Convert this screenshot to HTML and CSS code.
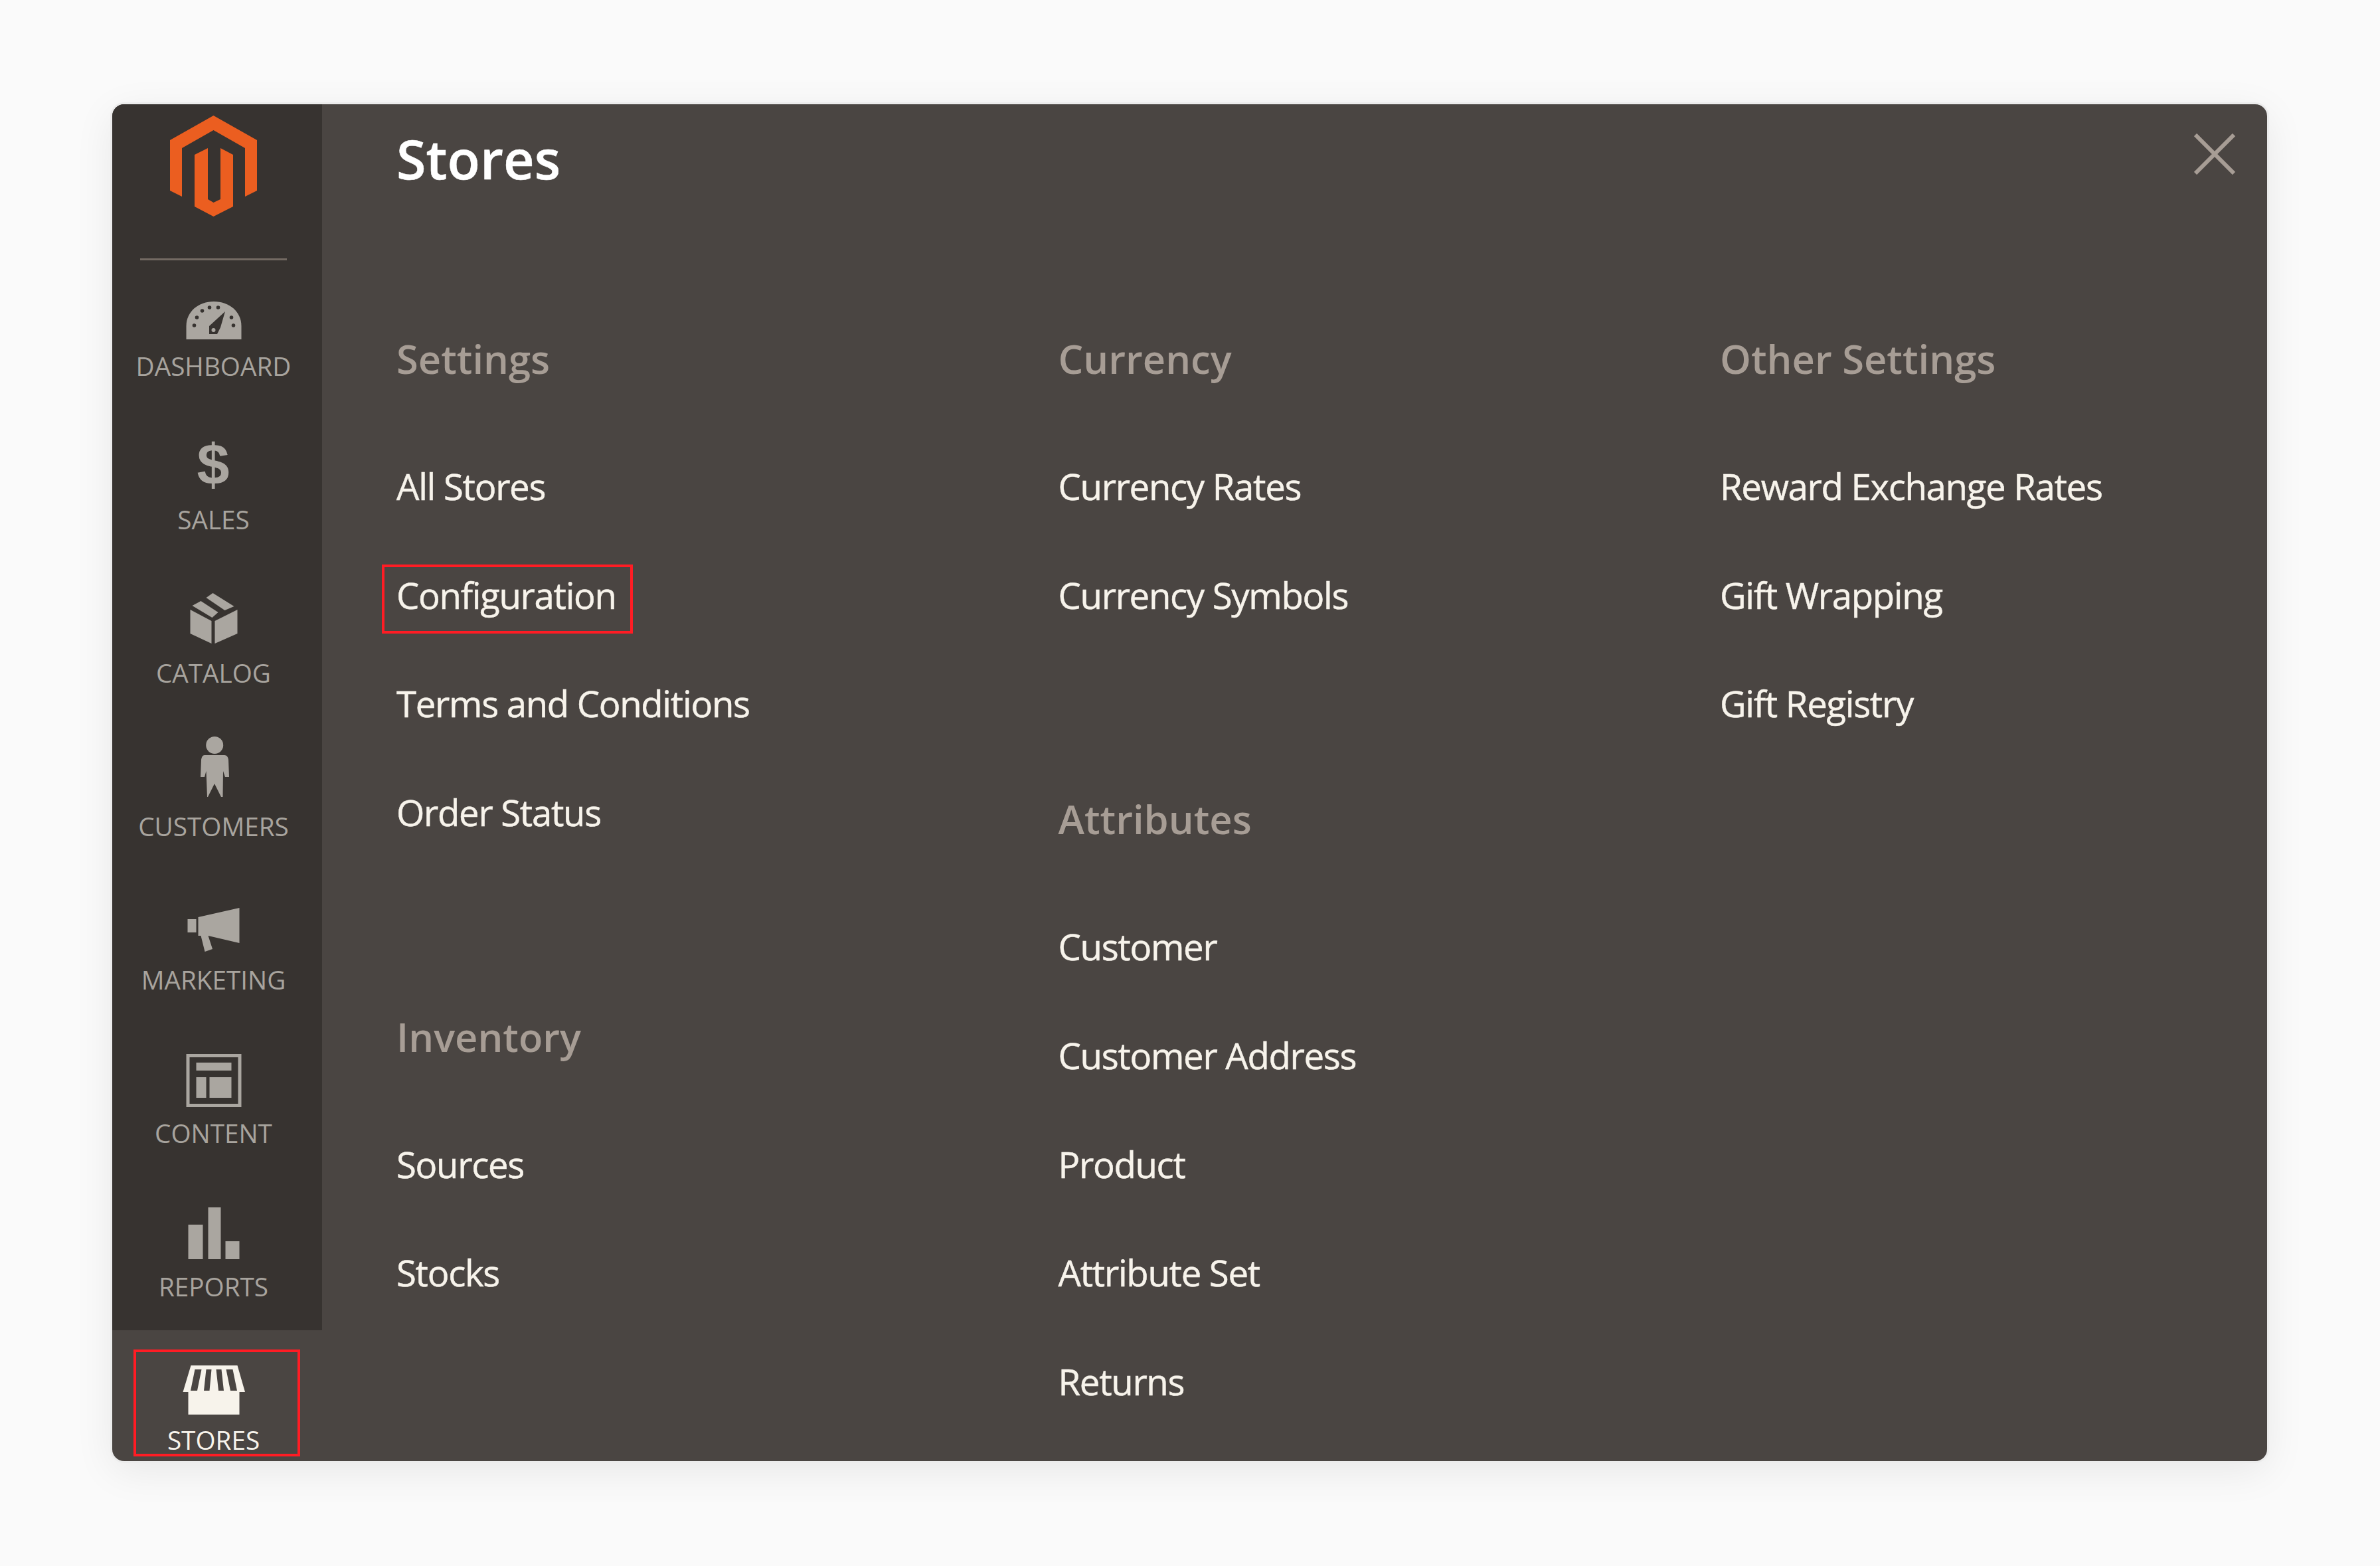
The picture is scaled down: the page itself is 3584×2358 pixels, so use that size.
FILE: index.html
```html
<!DOCTYPE html>
<html lang="en">
<head>
<meta charset="utf-8">
<title>Stores menu</title>
<link rel="stylesheet" href="styles.css">
</head>
<body>
<div class="panel">
  <aside class="sidebar">
    <div class="brand">
      <svg class="logo" viewBox="0 0 131 152"><path d="M65.5 0L131 37V113L113 122V49L65.5 22L18 49V122L0 113V37Z"/><path d="M57 49V126L65.5 131L76 126V49L95 59V137L65.5 152L37 137V59Z"/></svg>
    </div>
    <nav class="nav">
      <a class="nav-item">
        <svg class="nav-icon" viewBox="0 -10 100 100"><path d="M8.5 90V70C8.5 48 27 33 50 33C73 33 91.5 48 91.5 70V90Z"/><g class="cut"><circle cx="20.5" cy="69" r="2.8"/><circle cx="24.5" cy="57" r="2.8"/><circle cx="32.5" cy="47" r="2.8"/><circle cx="43.5" cy="42" r="2.8"/><circle cx="56.5" cy="42" r="2.8"/><circle cx="76.5" cy="57" r="2.8"/><circle cx="79.5" cy="69" r="2.8"/><path d="M67 48L43 70V82H55L60 72Z"/></g><circle cx="49.5" cy="76" r="3"/></svg>
        <span class="nav-label">Dashboard</span>
      </a>
      <a class="nav-item">
        <svg class="nav-icon" viewBox="0 -10 100 100"><text class="dollar" x="49" y="78">$</text></svg>
        <span class="nav-label">Sales</span>
      </a>
      <a class="nav-item">
        <svg class="nav-icon" viewBox="0 -10 100 100"><path d="M14.5 35L46.5 52V86L14.5 71Z"/><path d="M51.5 52L85.5 35V71L51.5 86Z"/><path d="M17.5 29L30.5 22L56.5 39L47.5 47Z"/><path d="M38.5 17L48.5 10L80.5 30L66.5 36Z"/></svg>
        <span class="nav-label">Catalog</span>
      </a>
      <a class="nav-item">
        <svg class="nav-icon" viewBox="0 -10 100 100"><circle cx="51.2" cy="8" r="13"/><path d="M36 23H66Q71 23 72 30L73 56H67L64 47L63.5 86H61L51 66L41 86H40L38.5 47L36 56H30L31 30Q32 23 36 23Z"/></svg>
        <span class="nav-label">Customers</span>
      </a>
      <a class="nav-item">
        <svg class="nav-icon" viewBox="0 -10 100 100"><rect x="10.5" y="39" width="13" height="20"/><path d="M26.5 36L88.5 22V75L41.5 64L48 84L36.5 88L30.5 64H26.5Z"/></svg>
        <span class="nav-label">Marketing</span>
      </a>
      <a class="nav-item">
        <svg class="nav-icon" viewBox="0 -10 100 100"><rect class="frame" x="11" y="13.5" width="78" height="75"/><rect x="23.5" y="24" width="53" height="12"/><rect x="23.5" y="46" width="15" height="31"/><rect x="43.5" y="46" width="33" height="31"/></svg>
        <span class="nav-label">Content</span>
      </a>
      <a class="nav-item">
        <svg class="nav-icon" viewBox="0 -10 100 100"><rect x="11.5" y="37" width="22" height="52"/><rect x="41.5" y="11" width="19" height="78"/><rect x="67.5" y="62" width="21" height="27"/></svg>
        <span class="nav-label">Reports</span>
      </a>
      <a class="nav-item is-active">
        <svg class="nav-icon" viewBox="0 -10 100 100"><path fill-rule="evenodd" d="M15.5 18H85.5L97 58H3.5ZM21.5 24L15 56H25L31.5 24ZM38.5 24L35 56H43.5L46.5 24ZM53.5 24L57 56H65L61.5 24ZM68.5 24L75 56H85L78.5 24Z"/><rect x="11.5" y="57" width="77" height="35"/></svg>
        <span class="nav-label">Stores</span>
      </a>
    </nav>
  </aside>
  <main class="content">
    <h1 class="title">Stores</h1>
    <button class="close" aria-label="Close"><svg viewBox="0 0 62 62"><path d="M2 2L60 60M60 2L2 60"/></svg></button>
    <div class="columns">
      <div class="column">
        <section class="group">
          <h2 class="group-title">Settings</h2>
          <ul class="links">
            <li><a class="link">All Stores</a></li>
            <li><a class="link is-marked">Configuration</a></li>
            <li><a class="link">Terms and Conditions</a></li>
            <li><a class="link">Order Status</a></li>
          </ul>
        </section>
        <section class="group">
          <h2 class="group-title">Inventory</h2>
          <ul class="links">
            <li><a class="link">Sources</a></li>
            <li><a class="link">Stocks</a></li>
          </ul>
        </section>
      </div>
      <div class="column">
        <section class="group">
          <h2 class="group-title">Currency</h2>
          <ul class="links">
            <li><a class="link">Currency Rates</a></li>
            <li><a class="link">Currency Symbols</a></li>
          </ul>
        </section>
        <section class="group">
          <h2 class="group-title">Attributes</h2>
          <ul class="links">
            <li><a class="link">Customer</a></li>
            <li><a class="link">Customer Address</a></li>
            <li><a class="link">Product</a></li>
            <li><a class="link">Attribute Set</a></li>
            <li><a class="link">Returns</a></li>
          </ul>
        </section>
      </div>
      <div class="column">
        <section class="group">
          <h2 class="group-title">Other Settings</h2>
          <ul class="links">
            <li><a class="link">Reward Exchange Rates</a></li>
            <li><a class="link">Gift Wrapping</a></li>
            <li><a class="link">Gift Registry</a></li>
          </ul>
        </section>
      </div>
    </div>
  </main>
</div>
</body>
</html>
```
FILE: styles.css
```css
*, *::before, *::after { box-sizing: border-box; }
html, body { margin: 0; padding: 0; }
body {
  width: 3584px;
  height: 2358px;
  overflow: hidden;
  background: #fafafa;
  padding: 157px 170px 158px 169px;
  font-family: "Open Sans", "Liberation Sans", sans-serif;
}
.panel {
  position: relative;
  display: flex;
  height: 2043px;
  background: #4a4542;
  border-radius: 18px;
  box-shadow: 0 0 0 3px #ececec, 0 14px 60px rgba(0, 0, 0, .08);
}
.sidebar { width: 316px; flex: none; display: flex; flex-direction: column; }
.brand {
  height: 235px;
  margin-bottom: -6px;
  padding: 17px 11px 0 0;
  background: #373330;
  border-radius: 18px 0 0 0;
  position: relative;
  z-index: 1;
  display: flex;
  justify-content: center;
  align-items: flex-start;
}
.brand::after {
  content: "";
  position: absolute;
  left: 42px;
  top: 232px;
  width: 221px;
  height: 3px;
  background: #736a62;
}
.logo { width: 131px; height: 152px; fill: #eb5e20; display: block; }
.nav { display: flex; flex-direction: column; }
.nav-item {
  height: 231px;
  padding: 25px 11px 0 0;
  background: #373330;
  display: flex;
  flex-direction: column;
  align-items: center;
  color: #a8a49e;
}
.nav-icon { width: 100px; height: 100px; fill: #aaa6a0; display: block; flex: none; overflow: visible; }
.nav-icon .cut { fill: #373330; }
.nav-icon .frame { fill: none; stroke: #aaa6a0; stroke-width: 5; }
.dollar { font: 700 88px "Liberation Sans", sans-serif; text-anchor: middle; }
.nav-label {
  font-size: 38.7px;
  line-height: 80px;
  text-transform: uppercase;
  white-space: nowrap;
}
.nav-item.is-active {
  position: relative;
  background: transparent;
  color: #f7f3eb;
  height: 197px;
  border-radius: 0 0 0 18px;
}
.nav-item.is-active .nav-icon { fill: #f7f3eb; }
.nav-item.is-active::after {
  content: "";
  position: absolute;
  left: 32px;
  top: 29px;
  width: 251px;
  height: 161px;
  border: 4px solid #ff1c24;
}
.content { flex: 1; padding-left: 112px; position: relative; min-width: 0; }
.title {
  margin: 0 0 109px;
  font-size: 81px;
  line-height: 164px;
  font-weight: 600;
  color: #fff;
  -webkit-text-stroke: .5px #fff;
}
.close {
  position: absolute;
  right: 48px;
  top: 44px;
  width: 62px;
  height: 62px;
  padding: 0;
  border: 0;
  background: none;
}
.close svg { display: block; width: 62px; height: 62px; fill: none; stroke: #a79d95; stroke-width: 6; }
.columns { display: grid; grid-template-columns: repeat(3, 996.5px); }
.group + .group { margin-top: 146px; }
.group-title {
  margin: 0;
  font-size: 59.7px;
  line-height: 220px;
  font-weight: 600;
  color: #a79d95;
}
.links { list-style: none; margin: 0; padding: 0; }
.links li { height: 163.7px; }
.link {
  display: inline-block;
  position: relative;
  font-size: 54.5px;
  letter-spacing: -1.3px;
  line-height: 164px;
  color: #f7f3eb;
  -webkit-text-stroke: .5px #f7f3eb;
  white-space: nowrap;
}
.link.is-marked::after {
  content: "";
  position: absolute;
  left: -22px;
  right: -25px;
  top: 36px;
  height: 104px;
  border: 4px solid #ff1c24;
}
```
